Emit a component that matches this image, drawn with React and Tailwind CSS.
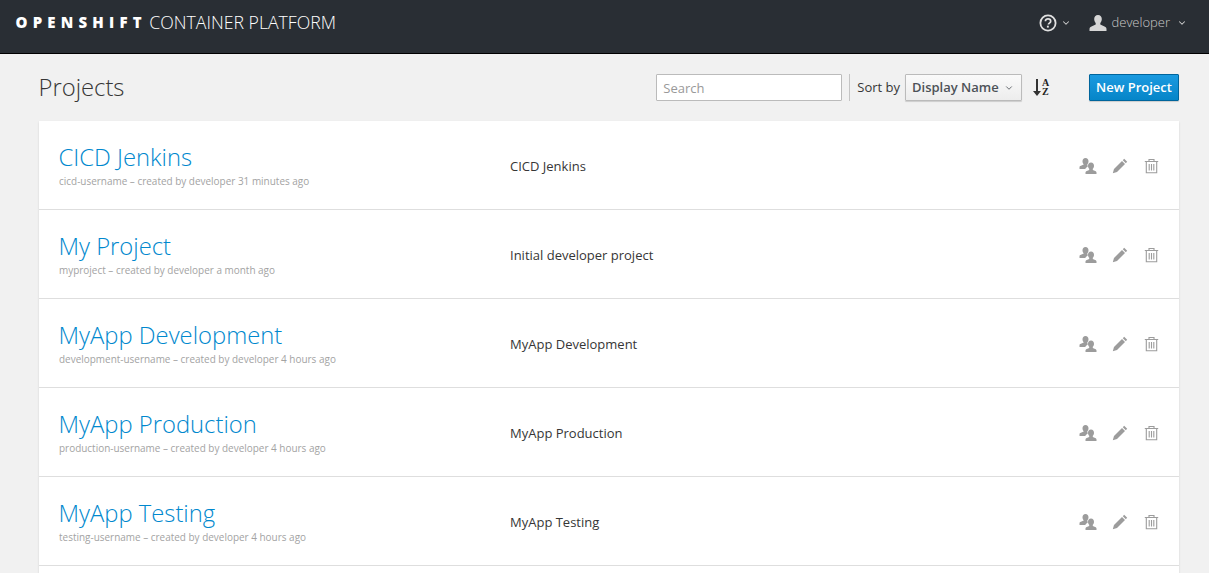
import React from "react";
import { ChevronDown } from "lucide-react";

const projects = [
  { title: "CICD Jenkins", meta: "cicd-username – created by developer 31 minutes ago", desc: "CICD Jenkins" },
  { title: "My Project", meta: "myproject – created by developer a month ago", desc: "Initial developer project" },
  { title: "MyApp Development", meta: "development-username – created by developer 4 hours ago", desc: "MyApp Development" },
  { title: "MyApp Production", meta: "production-username – created by developer 4 hours ago", desc: "MyApp Production" },
  { title: "MyApp Testing", meta: "testing-username – created by developer 4 hours ago", desc: "MyApp Testing" },
];

const UsersIcon = () => (
  <svg width="18" height="18" viewBox="0 0 18 18" fill="#9c9c9c" className="mr-[-1px]">
    <path d="M6.5 1c1.900 0 3 1.400 3 3.300 0 1.300-.5 2.400-1.200 3.100v1.200c.3.2.6.3.9.5-.8.5-1.700 1.200-2.200 1.900-.3.5-.5.7-.9 1H.5v-1.600c0-.9.5-1.200 1.400-1.600l2.900-1.200V7.400C4 6.700 3.500 5.600 3.500 4.300 3.500 2.400 4.600 1 6.500 1z" />
    <path d="M12 5.500c1.900 0 3 1.400 3 3.200 0 1.300-.5 2.400-1.200 3.100v1.300l2.400 1c.9.4 1.300.8 1.300 1.600V17H6.500v-1.300c0-.8.4-1.200 1.300-1.600l2.400-1v-1.300C9.500 11.100 9 10 9 8.700c0-1.800 1.100-3.200 3-3.200z" />
  </svg>
);

const PencilIcon = () => (
  <svg width="16" height="16" viewBox="0 0 16 16" fill="#9c9c9c">
    <path d="M12.200.8 15.200 3.800 13.800 5.200 10.800 2.200z" />
    <path d="M10 3 13 6 5 14 .8 15.200 2 11z" />
  </svg>
);

const TrashIcon = () => (
  <svg width="15" height="16" viewBox="0 0 15 16" fill="none" stroke="#9c9c9c" strokeWidth="1.100">
    <path d="M.8 3.500h13.400M5 3.300V1.500h5v1.800M2.300 3.500v11.200h10.400V3.500M5.200 6v6.500M7.500 6v6.500M9.800 6v6.500" />
  </svg>
);

const SortIcon = () => (
  <div className="flex items-center h-[20px]">
    <svg width="8" height="18" viewBox="0 0 8 18" fill="#333">
      <path d="M3 1h2v12h3l-4 5-4-5h3z" />
    </svg>
    <div className="flex flex-col ml-[1px] font-['Liberation_Serif',serif] font-bold text-[10px] leading-[9px] text-[#222]">
      <span>A</span>
      <span>Z</span>
    </div>
  </div>
);

const ProjectRow = ({ project }) => (
  <div className="flex items-center h-[89px] border-b border-[#dedede] pl-[20px] pr-[20px]">
    <div className="w-[451px] pt-[1px]">
      <div className="text-[23.800px] leading-[29px] font-light text-[#0088ce] ml-[-0.5px]">{project.title}</div>
      <div className="text-[9.960px] leading-[14px] mt-[2px] text-[#a3a3a3]">{project.meta}</div>
    </div>
    <div className="flex-1 text-[13px] text-[#363636] pt-[4px]">{project.desc}</div>
    <div className="flex items-center gap-[16px] pt-[2px]">
      <UsersIcon />
      <PencilIcon />
      <TrashIcon />
    </div>
  </div>
);

export default function App() {
  return (
    <div className="h-[573px] overflow-hidden bg-[#f1f1f1] font-['Open_Sans',sans-serif]">
      <div className="flex items-center justify-between h-[54px] bg-[#292e34] border-b border-black pl-[15.500px] pr-[22px]">
        <div className="flex items-center text-white pb-[8px]">
          <span className="text-[15px] font-extrabold tracking-[5.200px]">OPENSHIFT</span>
          <span className="text-[17.700px] font-light ml-[2.500px]">CONTAINER PLATFORM</span>
        </div>
        <div className="flex items-center text-[#d0d0d0] pb-[8px]">
          <svg width="18" height="18" viewBox="0 0 18 18" fill="none" className="text-[#e0e0e0]">
            <circle cx="9" cy="9" r="7.600" stroke="currentColor" strokeWidth="1.800" />
            <path d="M6.400 7.200c0-1.500 1.100-2.300 2.600-2.300s2.700.8 2.700 2.300c0 1.900-2.300 1.900-2.300 3.300" stroke="currentColor" strokeWidth="1.700" />
            <rect x="7.900" y="11.700" width="1.900" height="1.900" fill="currentColor" />
          </svg>
          <ChevronDown size={10} strokeWidth={2.500} className="ml-[4px]" />
          <svg width="18" height="16" viewBox="0 0 18 16" fill="#d6d6d6" className="ml-[18px]">
            <path d="M9 0c2.500 0 3.800 1.800 3.800 4 0 1.700-.7 3.100-1.500 4v1.500l4.200 2c1.400.7 2 1.200 2 2.500v2H.5v-2c0-1.300.6-1.800 2-2.500l4.200-2V8C5.900 7.100 5.200 5.700 5.200 4 5.200 1.800 6.500 0 9 0z" />
          </svg>
          <span className="text-[13px] font-light ml-[5px] text-[#c9c9c9]">developer</span>
          <ChevronDown size={10} strokeWidth={2.500} className="ml-[7px]" />
        </div>
      </div>

      <div className="pl-[39px] pr-[30px]">
        <div className="flex items-center h-[67px] pb-[1px]">
          <h1 className="text-[23.800px] font-light text-[#363636] pt-[2px] ml-[-0.5px]">Projects</h1>
          <div className="ml-auto flex items-center h-[27px]">
            <input
              placeholder="Search"
              className="w-[186px] h-[27px] pt-[1px] bg-white border border-[#bbb] rounded-[1px] px-[6px] text-[13px] placeholder:text-[#999] outline-none"
            />
            <div className="w-px h-[27px] bg-[#c4c4c4] ml-[7px]" />
            <span className="text-[13px] text-[#363636] ml-[7px] pt-[2px]">Sort by</span>
            <button className="flex items-center w-[117px] h-[27px] ml-[5px] pl-[6px] pt-[2px] bg-gradient-to-b from-[#fafafa] to-[#ededed] border border-[#bbb] rounded-[1px] shadow-[0_1px_1px_rgba(0,0,0,0.15)] text-[13px] font-semibold text-[#4d5258]">
              Display Name
              <ChevronDown size={10} strokeWidth={2} className="ml-[5px]" />
            </button>
            <div className="ml-[11px] w-[56px]">
              <SortIcon />
            </div>
            <button className="w-[90px] h-[27px] pt-[1px] bg-gradient-to-b from-[#1a9ae0] to-[#0585c8] border border-[#00659c] rounded-[1px] text-[13px] font-semibold text-white shadow-[0_1px_1px_rgba(0,0,0,0.15)]">
              New Project
            </button>
          </div>
        </div>

        <div className="bg-white shadow-[0_1px_2px_rgba(0,0,0,0.12)]">
          {projects.map((project) => (
            <ProjectRow key={project.title} project={project} />
          ))}
          <div className="h-[40px]" />
        </div>
      </div>
    </div>
  );
}
